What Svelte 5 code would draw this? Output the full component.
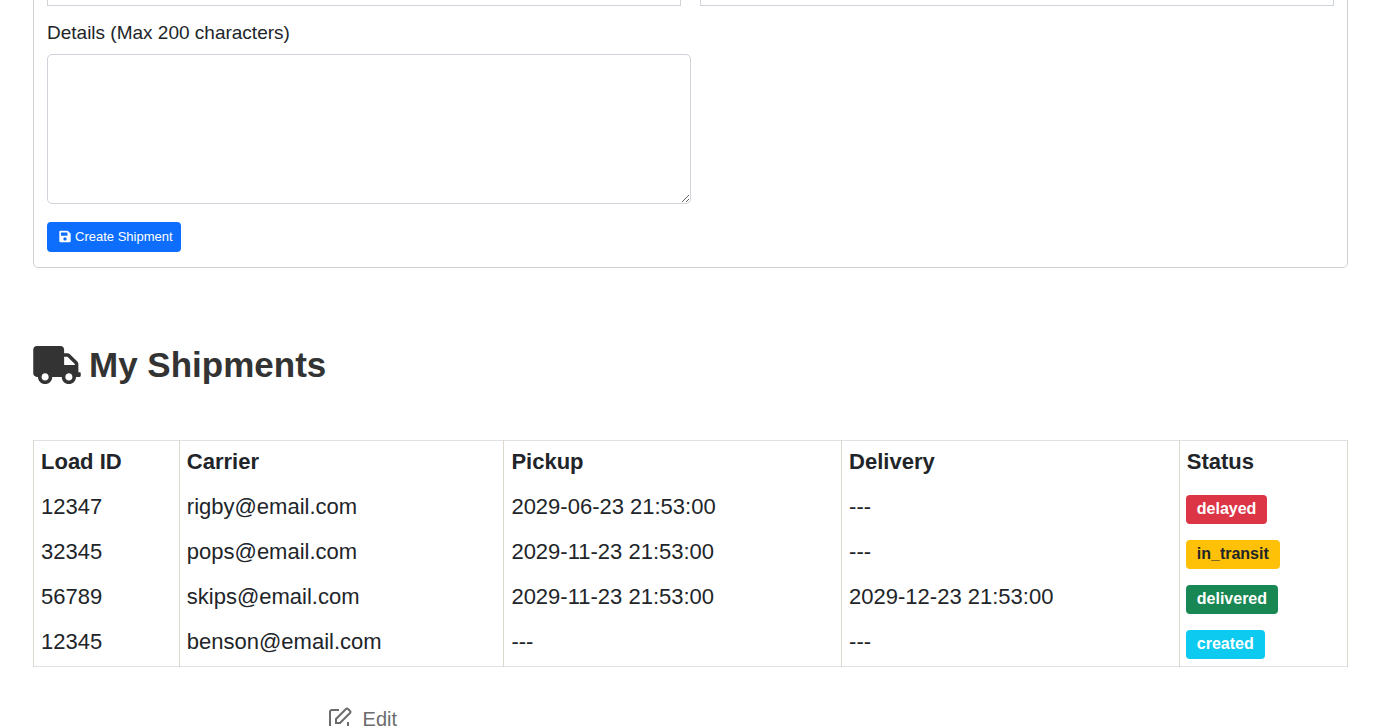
<script>
	let pickup = '';
	let delivery = '';
	let details = '';

	const shipments = [
		{ id: '12347', carrier: 'rigby@email.com', pickup: '2029-06-23 21:53:00', delivery: '---', status: 'delayed' },
		{ id: '32345', carrier: 'pops@email.com', pickup: '2029-11-23 21:53:00', delivery: '---', status: 'in_transit' },
		{ id: '56789', carrier: 'skips@email.com', pickup: '2029-11-23 21:53:00', delivery: '2029-12-23 21:53:00', status: 'delivered' },
		{ id: '12345', carrier: 'benson@email.com', pickup: '---', delivery: '---', status: 'created' }
	];
</script>

<main class="page">
	<form class="card" on:submit|preventDefault>
		<div class="row">
			<input type="text" aria-label="Pickup" bind:value={pickup} />
			<input type="text" aria-label="Delivery" bind:value={delivery} />
		</div>
		<label for="details">Details (Max 200 characters)</label>
		<textarea id="details" maxlength="200" bind:value={details}></textarea>
		<button class="create" type="submit">
			<svg viewBox="0 0 448 512" width="12" height="13" aria-hidden="true">
				<path
					fill="currentColor"
					d="M433.941 129.941l-83.882-83.882A48 48 0 0 0 316.118 32H48C21.49 32 0 53.49 0 80v352c0 26.51 21.49 48 48 48h352c26.51 0 48-21.49 48-48V163.882a48 48 0 0 0-14.059-33.941zM224 416c-35.346 0-64-28.654-64-64 0-35.346 28.654-64 64-64s64 28.654 64 64c0 35.346-28.654 64-64 64zm96-304.52V212c0 6.627-5.373 12-12 12H76c-6.627 0-12-5.373-12-12V108c0-6.627 5.373-12 12-12h228.52c3.183 0 6.235 1.264 8.485 3.515l3.48 3.48A11.996 11.996 0 0 1 320 111.48z"
				/>
			</svg>
			Create Shipment
		</button>
	</form>

	<h1>
		<svg viewBox="0 0 640 512" width="48" height="38" aria-hidden="true">
			<path
				fill="currentColor"
				d="M624 352h-16V243.9c0-12.7-5.1-24.9-14.1-33.9L494 110.1c-9-9-21.2-14.1-33.9-14.1H416V48c0-26.5-21.5-48-48-48H48C21.5 0 0 21.5 0 48v320c0 26.5 21.5 48 48 48h16c0 53 43 96 96 96s96-43 96-96h128c0 53 43 96 96 96s96-43 96-96h48c8.8 0 16-7.2 16-16v-32c0-8.8-7.2-16-16-16zM160 464c-26.5 0-48-21.5-48-48s21.5-48 48-48 48 21.5 48 48-21.5 48-48 48zm320 0c-26.5 0-48-21.5-48-48s21.5-48 48-48 48 21.5 48 48-21.5 48-48 48zm80-208H416V144h44.1l99.9 99.9V256z"
			/>
		</svg>
		My Shipments
	</h1>

	<table>
		<thead>
			<tr>
				<th class="id">Load ID</th>
				<th class="carrier">Carrier</th>
				<th class="date">Pickup</th>
				<th class="date">Delivery</th>
				<th>Status</th>
			</tr>
		</thead>
		<tbody>
			{#each shipments as item}
				<tr>
					<td>{item.id}</td>
					<td>{item.carrier}</td>
					<td>{item.pickup}</td>
					<td>{item.delivery}</td>
					<td class="status"><span class="badge {item.status}">{item.status}</span></td>
				</tr>
			{/each}
		</tbody>
	</table>

	<div class="actions">
		<a href="#edit">
			<svg viewBox="0 0 24 24" width="24" height="24" fill="none" stroke="currentColor" stroke-width="2" aria-hidden="true">
				<path d="M11 3H4Q2 3 2 5V20Q2 22 4 22H18Q20 22 20 20V15" />
				<path d="M8 16V12L18 2Q19 1 20 2L22 4Q23 5 22 6L12 16Z" />
			</svg>
			Edit
		</a>
	</div>
</main>

<style>
	:global(body) {
		background: #fff;
	}

	.page {
		height: 100vh;
		overflow: hidden;
		box-sizing: border-box;
		padding: 0 43px 0 33px;
		font-family: 'Liberation Sans', Arial, sans-serif;
		color: #212529;
	}

	.page * {
		box-sizing: border-box;
	}

	/* Shipment form, its first fields run up past the top edge */
	.card {
		margin-top: -46px;
		padding: 13px;
		padding-bottom: 15px;
		border: 1px solid #d0d0d4;
		border-radius: 5px;
	}

	.row {
		display: grid;
		grid-template-columns: 1fr 1fr;
		gap: 19px;
	}

	input,
	textarea {
		display: block;
		border: 1px solid #ced4da;
		background: #fff;
		font: inherit;
		font-size: 19px;
		color: inherit;
	}

	input {
		width: 100%;
		height: 38px;
	}

	label {
		display: block;
		margin: 12px 0 6px;
		font-size: 19px;
		line-height: 30px;
	}

	textarea {
		width: 50%;
		height: 150px;
		padding: 6px 12px;
		border-radius: 5px;
		resize: both;
	}

	.create {
		display: flex;
		align-items: center;
		gap: 4px;
		height: 30px;
		margin-top: 18px;
		padding: 0 8px 2px 12px;
		border: 0;
		border-radius: 4px;
		background: #0d6efd;
		color: #fff;
		font: inherit;
		font-size: 13px;
		cursor: pointer;
	}

	h1 {
		display: flex;
		align-items: center;
		gap: 8px;
		margin: 74px 0 52px;
		font-size: 35px;
		line-height: 46px;
		color: #333;
	}

	table {
		width: 100%;
		table-layout: fixed;
		border-collapse: collapse;
		border: 1px solid #dee2e6;
		font-size: 22px;
		line-height: 32px;
	}

	th,
	td {
		height: 45px;
		padding: 5px 7px;
		border-left: 1px solid #dcd8d0;
		border-right: 1px solid #dcd8d0;
		text-align: left;
		vertical-align: top;
	}

	.id {
		width: 11.1%;
	}

	.carrier {
		width: 24.7%;
	}

	.date {
		width: 25.7%;
	}

	.status {
		padding: 9px 6px 7px;
	}

	.badge {
		display: block;
		width: fit-content;
		padding: 0 11px 2px;
		border-radius: 4px;
		font-size: 16px;
		font-weight: bold;
		line-height: 27px;
		color: #fff;
	}

	.delayed {
		background: #dc3545;
	}

	.in_transit {
		background: #ffc107;
		color: #212529;
	}

	.delivered {
		background: #198754;
	}

	.created {
		background: #0dcaf0;
	}

	.actions {
		margin-top: 38px;
		padding-left: 22.4%;
	}

	.actions a {
		display: inline-flex;
		align-items: center;
		gap: 11px;
		font-size: 20px;
		line-height: 28px;
		color: #6c6c6c;
		text-decoration: none;
	}
</style>
